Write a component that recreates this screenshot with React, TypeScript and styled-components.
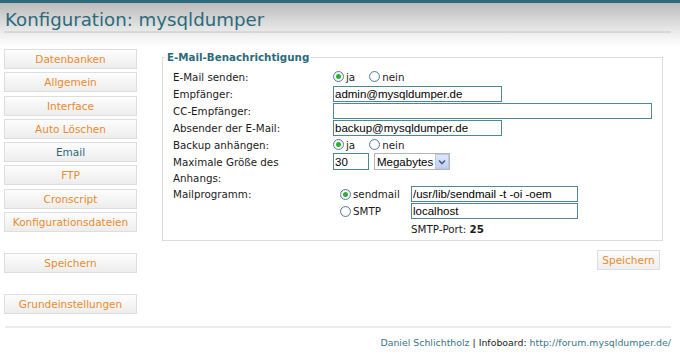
import React, { useState } from "react";
import styled, { createGlobalStyle } from "styled-components";

const GlobalStyle = createGlobalStyle`
  html, body {
    margin: 0;
    padding: 0;
    background: #fff;
  }
  body {
    font-family: "DejaVu Sans", Verdana, sans-serif;
    font-size: 10.3px;
    color: #1a1a1a;
  }
`;

const teal = "#2b6a7b";
const orange = "#e98a2c";

const Page = styled.div`
  width: 680px;
  min-height: 364px;
`;

const Header = styled.div`
  border-top: 3px solid ${teal};
  padding: 6px 0 14px;
  background: linear-gradient(to bottom, #bbbbbb 0, #cfcfcf 12px, #f0f0f0 32px, #fff 44px);
`;

const Title = styled.h1`
  margin: 0 9px 0 4px;
  padding-left: 1px;
  font-size: 18.2px;
  font-weight: normal;
  line-height: 22px;
  color: ${teal};
  border-bottom: 2px solid #d8d8d8;
`;

const Main = styled.div`
  display: flex;
  align-items: flex-start;
  padding-left: 4px;
`;

const Sidebar = styled.nav`
  display: flex;
  flex-direction: column;
  width: 133px;
  padding-top: 2px;
`;

const NavGroup = styled.div`
  display: flex;
  flex-direction: column;
  gap: 3.3px;
  margin-bottom: 21px;
`;

const NavButton = styled.button<{ $active?: boolean; $gap?: number }>`
  box-sizing: border-box;
  width: 133px;
  height: 20px;
  margin: 0 0 ${({ $gap }) => $gap ?? 0}px;
  padding: 0;
  border: 1px solid #dedede;
  background: linear-gradient(to bottom, #fdfdfd, #ededed);
  font-family: "DejaVu Sans", Verdana, sans-serif;
  font-size: 10.5px;
  line-height: 18px;
  text-align: center;
  color: ${({ $active }) => ($active ? teal : orange)};
  cursor: pointer;
`;

const Content = styled.div`
  display: flex;
  flex-direction: column;
  width: 501px;
  margin-left: 25px;
  padding-top: 3px;
`;

const Fieldset = styled.fieldset`
  margin: 0;
  padding: 4px 10px 3px;
  border: 1px solid #dcdcdc;
  min-width: 0;
`;

const Legend = styled.legend`
  margin-left: -8px;
  padding: 0 2px;
  font-size: 10.3px;
  font-weight: bold;
  line-height: 14px;
  color: ${teal};
`;

const FormGrid = styled.div`
  display: grid;
  grid-template-columns: 150px 1fr;
  column-gap: 10px;
  grid-auto-rows: minmax(17px, auto);
`;

const Label = styled.div`
  line-height: 16px;
  padding-top: 0.5px;
`;

const Value = styled.div`
  display: flex;
  align-items: center;
  gap: 5px;
  min-height: 17px;
`;

const TopValue = styled(Value)`
  align-items: flex-start;
`;

const RadioOption = styled.label`
  display: inline-flex;
  align-items: center;
  gap: 2px;
  margin-right: 9px;
  line-height: 16px;
`;

const Radio = styled.input.attrs({ type: "radio" })`
  appearance: none;
  box-sizing: border-box;
  width: 11px;
  height: 11px;
  margin: 0;
  border: 1px solid #5a7d9c;
  border-radius: 50%;
  background: radial-gradient(circle, #ffffff 40%, #dfe6ee 100%);
  position: relative;
  &:checked::after {
    content: "";
    position: absolute;
    left: 2px;
    top: 2px;
    width: 5px;
    height: 5px;
    border-radius: 50%;
    background: #2fae35;
  }
`;

const TextInput = styled.input<{ $w: number }>`
  box-sizing: border-box;
  width: ${({ $w }) => $w}px;
  height: 16px;
  margin: 0;
  padding: 0 1px;
  border: 1px solid #4f8797;
  font-family: "Liberation Sans", Arial, sans-serif;
  font-size: 11.5px;
  color: #000;
  background: #fff;
  outline: none;
`;

const SizeInput = styled(TextInput)`
  height: 17px;
`;

const SelectBox = styled.div`
  box-sizing: border-box;
  display: inline-flex;
  width: 76px;
  height: 17px;
  border: 1px solid #b5b5b5;
  background: #fff;
`;

const Select = styled.select`
  flex: 1;
  min-width: 0;
  appearance: none;
  border: none;
  margin: 0;
  padding: 0 0 0 2px;
  background: transparent;
  font-family: "Liberation Sans", Arial, sans-serif;
  font-size: 11.5px;
  color: #000;
  outline: none;
`;

const ArrowButton = styled.span`
  box-sizing: border-box;
  display: flex;
  align-items: center;
  justify-content: center;
  width: 14px;
  height: 15px;
  border: 1px solid #b7c9e8;
  background: linear-gradient(to bottom, #dde7fb, #bfd0f5);
`;

const MailGrid = styled.div`
  display: grid;
  grid-template-columns: 71px 167px;
  grid-auto-rows: 17px;
  align-items: center;
  padding-left: 7px;
`;

const PortText = styled.div`
  line-height: 16px;
  padding-top: 2px;
`;

const Actions = styled.div`
  display: flex;
  justify-content: flex-end;
  padding: 9px 3px 0 0;
`;

const SaveButton = styled.button`
  box-sizing: border-box;
  width: 63px;
  height: 20px;
  padding: 0;
  border: 1px solid #dedede;
  background: linear-gradient(to bottom, #fdfdfd, #eeeeee);
  font-family: "DejaVu Sans", Verdana, sans-serif;
  font-size: 10.5px;
  color: ${orange};
  cursor: pointer;
`;

const Footer = styled.footer`
  margin: 12px 9px 0 5px;
  border-top: 2px solid #ececec;
  padding-top: 9px;
  text-align: right;
  font-size: 9.4px;
  line-height: 12px;
  color: #222;
`;

const FooterLink = styled.a`
  color: #3a7587;
  text-decoration: none;
`;

const menu = [
  "Datenbanken",
  "Allgemein",
  "Interface",
  "Auto Löschen",
  "Email",
  "FTP",
  "Cronscript",
  "Konfigurationsdateien",
];

export default function App() {
  const [sendMail, setSendMail] = useState("ja");
  const [attach, setAttach] = useState("ja");
  const [program, setProgram] = useState("sendmail");

  return (
    <Page>
      <GlobalStyle />
      <Header>
        <Title>Konfiguration: mysqldumper</Title>
      </Header>
      <Main>
        <Sidebar>
          <NavGroup>
            {menu.map((item) => (
              <NavButton key={item} $active={item === "Email"}>
                {item}
              </NavButton>
            ))}
          </NavGroup>
          <NavButton $gap={21}>Speichern</NavButton>
          <NavButton>Grundeinstellungen</NavButton>
        </Sidebar>
        <Content>
          <Fieldset>
            <Legend>E-Mail-Benachrichtigung</Legend>
            <FormGrid>
              <Label>E-Mail senden:</Label>
              <Value>
                <RadioOption>
                  <Radio name="send" checked={sendMail === "ja"} onChange={() => setSendMail("ja")} />
                  ja
                </RadioOption>
                <RadioOption>
                  <Radio name="send" checked={sendMail === "nein"} onChange={() => setSendMail("nein")} />
                  nein
                </RadioOption>
              </Value>

              <Label>Empfänger:</Label>
              <Value>
                <TextInput $w={169} defaultValue="admin@mysqldumper.de" />
              </Value>

              <Label>CC-Empfänger:</Label>
              <Value>
                <TextInput $w={319} defaultValue="" />
              </Value>

              <Label>Absender der E-Mail:</Label>
              <Value>
                <TextInput $w={169} defaultValue="backup@mysqldumper.de" />
              </Value>

              <Label>Backup anhängen:</Label>
              <Value>
                <RadioOption>
                  <Radio name="attach" checked={attach === "ja"} onChange={() => setAttach("ja")} />
                  ja
                </RadioOption>
                <RadioOption>
                  <Radio name="attach" checked={attach === "nein"} onChange={() => setAttach("nein")} />
                  nein
                </RadioOption>
              </Value>

              <Label>Maximale Größe des Anhangs:</Label>
              <TopValue>
                <SizeInput $w={36} defaultValue="30" />
                <SelectBox>
                  <Select defaultValue="Megabytes">
                    <option>Kilobytes</option>
                    <option>Megabytes</option>
                  </Select>
                  <ArrowButton>
                    <svg width="8" height="6" viewBox="0 0 8 6">
                      <path d="M1 1.5 L4 4.5 L7 1.5" fill="none" stroke="#4d6185" strokeWidth="1.6" />
                    </svg>
                  </ArrowButton>
                </SelectBox>
              </TopValue>

              <Label>Mailprogramm:</Label>
              <MailGrid>
                <RadioOption>
                  <Radio name="prog" checked={program === "sendmail"} onChange={() => setProgram("sendmail")} />
                  sendmail
                </RadioOption>
                <TextInput $w={167} defaultValue="/usr/lib/sendmail -t -oi -oem" />
                <RadioOption>
                  <Radio name="prog" checked={program === "smtp"} onChange={() => setProgram("smtp")} />
                  SMTP
                </RadioOption>
                <TextInput $w={167} defaultValue="localhost" />
                <span />
                <PortText>
                  SMTP-Port: <b>25</b>
                </PortText>
              </MailGrid>
            </FormGrid>
          </Fieldset>
          <Actions>
            <SaveButton>Speichern</SaveButton>
          </Actions>
        </Content>
      </Main>
      <Footer>
        <FooterLink href="#">Daniel Schlichtholz</FooterLink> | Infoboard:{" "}
        <FooterLink href="#">http://forum.mysqldumper.de/</FooterLink>
      </Footer>
    </Page>
  );
}
